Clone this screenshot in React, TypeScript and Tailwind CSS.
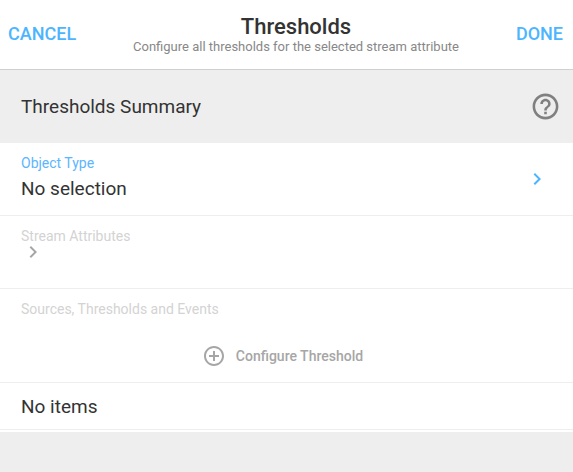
import { MdAddCircleOutline, MdChevronRight, MdHelpOutline } from "react-icons/md";

const items: string[] = [];

function Header() {
  return (
    <header className="flex items-center justify-between border-b border-[#d0d0d0] bg-white pb-[2px] pl-2 pr-[10px]">
      <button type="button" className="text-lg leading-5 font-medium text-[#4db5ff]">
        CANCEL
      </button>
      <div className="flex flex-col items-center pt-4 pb-3 text-center">
        <h1 className="text-[22px] leading-[22px] font-medium text-[#333333]">Thresholds</h1>
        <p className="text-[13px] leading-[17px] text-[#888888]">
          Configure all thresholds for the selected stream attribute
        </p>
      </div>
      <button type="button" className="text-lg leading-5 font-medium text-[#4db5ff]">
        DONE
      </button>
    </header>
  );
}

export default function App() {
  return (
    <div className="flex min-h-screen flex-col bg-[#eeeeee] font-['Roboto',sans-serif] text-[#333333]">
      <Header />

      <main>
        <div className="flex items-center justify-between py-5 pl-[21px] pr-3">
          <h2 className="text-[19px] leading-[33px]">Thresholds Summary</h2>
          <button type="button" aria-label="Help" className="text-[#808080]">
            <MdHelpOutline size={31} />
          </button>
        </div>

        <div className="bg-white pb-[2px]">
          <button
            type="button"
            className="flex w-full items-center justify-between border-b border-[#eeeeee] py-3 pl-[21px] pr-6 text-left"
          >
            <span className="flex flex-col gap-1">
              <span className="text-sm leading-4 text-[#5cb5ff]">Object Type</span>
              <span className="text-[19px] leading-7">No selection</span>
            </span>
            <MdChevronRight size={24} className="text-[#4db5ff]" />
          </button>

          <button
            type="button"
            disabled
            className="flex w-full flex-col border-b border-[#eeeeee] pt-3 pb-6 pl-[21px] text-left"
          >
            <span className="text-sm leading-4 text-[#d3d3d3]">Stream Attributes</span>
            <span className="flex h-5 items-start">
              <MdChevronRight size={24} className="-mt-1 text-[#a6a6a6]" />
            </span>
          </button>

          <section className="border-b border-[#eeeeee] pt-3 pb-[14px]">
            <h3 className="pl-[21px] text-sm leading-4 text-[#d3d3d3]">
              Sources, Thresholds and Events
            </h3>
            <button
              type="button"
              disabled
              className="mx-auto mt-[27px] flex items-center gap-[10px] pr-2 text-sm font-medium text-[#a6a6a6]"
            >
              <MdAddCircleOutline size={24} />
              Configure Threshold
            </button>
          </section>

          {items.length === 0 && (
            <p className="border-b border-[#eeeeee] pt-2 pb-[6px] pl-[21px] text-[19px] leading-8">No items</p>
          )}
        </div>
      </main>
    </div>
  );
}
